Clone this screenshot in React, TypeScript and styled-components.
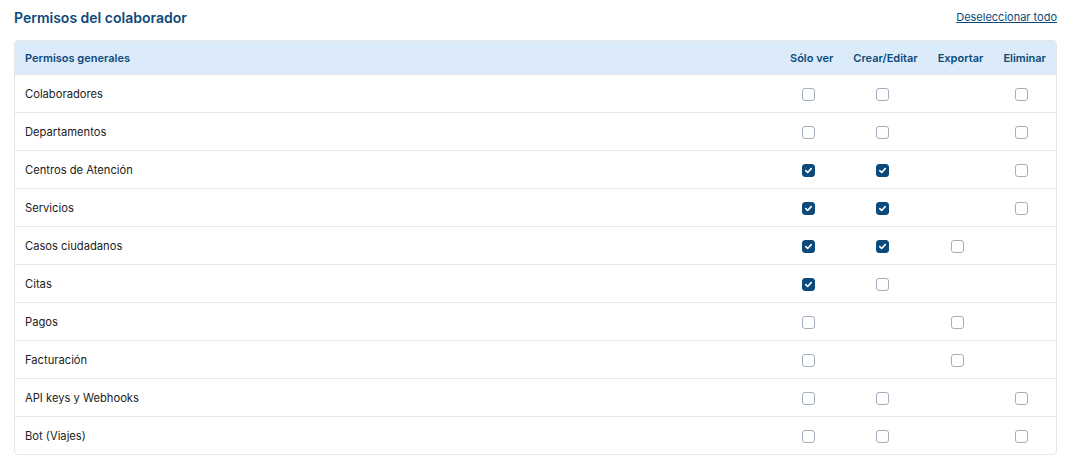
import React, { useState } from "react";
import styled, { createGlobalStyle } from "styled-components";

type Perm = "ver" | "editar" | "exportar" | "eliminar";

interface Modulo {
  nombre: string;
  // null means the permission does not apply to this module
  permisos: Record<Perm, boolean | null>;
}

const columnas: { key: Perm; label: string }[] = [
  { key: "ver", label: "Sólo ver" },
  { key: "editar", label: "Crear/Editar" },
  { key: "exportar", label: "Exportar" },
  { key: "eliminar", label: "Eliminar" },
];

const inicial: Modulo[] = [
  { nombre: "Colaboradores", permisos: { ver: false, editar: false, exportar: null, eliminar: false } },
  { nombre: "Departamentos", permisos: { ver: false, editar: false, exportar: null, eliminar: false } },
  { nombre: "Centros de Atención", permisos: { ver: true, editar: true, exportar: null, eliminar: false } },
  { nombre: "Servicios", permisos: { ver: true, editar: true, exportar: null, eliminar: false } },
  { nombre: "Casos ciudadanos", permisos: { ver: true, editar: true, exportar: false, eliminar: null } },
  { nombre: "Citas", permisos: { ver: true, editar: false, exportar: null, eliminar: null } },
  { nombre: "Pagos", permisos: { ver: false, editar: null, exportar: false, eliminar: null } },
  { nombre: "Facturación", permisos: { ver: false, editar: null, exportar: false, eliminar: null } },
  { nombre: "API keys y Webhooks", permisos: { ver: false, editar: false, exportar: null, eliminar: false } },
  { nombre: "Bot (Viajes)", permisos: { ver: false, editar: false, exportar: null, eliminar: false } },
];

export default function App() {
  const [modulos, setModulos] = useState<Modulo[]>(inicial);

  const toggle = (i: number, key: Perm) => {
    setModulos((prev) =>
      prev.map((m, idx) =>
        idx === i ? { ...m, permisos: { ...m.permisos, [key]: !m.permisos[key] } } : m
      )
    );
  };

  const deseleccionar = () => {
    setModulos((prev) =>
      prev.map((m) => {
        const p = { ...m.permisos };
        (Object.keys(p) as Perm[]).forEach((k) => {
          if (p[k] !== null) p[k] = false;
        });
        return { ...m, permisos: p };
      })
    );
  };

  return (
    <>
      <GlobalStyle />
      <Page>
        <TopBar>
          <Title>Permisos del colaborador</Title>
          <LinkBtn onClick={deseleccionar}>Deseleccionar todo</LinkBtn>
        </TopBar>
        <TableWrap>
          <Table>
            <thead>
              <tr>
                <Th>Permisos generales</Th>
                {columnas.map((c) => (
                  <Th key={c.key} $center>
                    {c.label}
                  </Th>
                ))}
              </tr>
            </thead>
            <tbody>
              {modulos.map((m, i) => (
                <Row key={m.nombre}>
                  <Td>{m.nombre}</Td>
                  {columnas.map((c) => (
                    <Td key={c.key} $center>
                      {m.permisos[c.key] !== null && (
                        <Check
                          type="button"
                          $checked={!!m.permisos[c.key]}
                          onClick={() => toggle(i, c.key)}
                        >
                          {m.permisos[c.key] && (
                            <svg width="9" height="9" viewBox="0 0 10 10">
                              <path
                                d="M2 5.2 L4.1 7.2 L8 2.9"
                                fill="none"
                                stroke="#fff"
                                strokeWidth="1.8"
                                strokeLinecap="round"
                                strokeLinejoin="round"
                              />
                            </svg>
                          )}
                        </Check>
                      )}
                    </Td>
                  ))}
                </Row>
              ))}
            </tbody>
          </Table>
        </TableWrap>
      </Page>
    </>
  );
}

const GlobalStyle = createGlobalStyle`
  body {
    margin: 0;
    background: #fff;
    font-family: Inter, "Noto Sans", sans-serif;
  }
`;

const Page = styled.div`
  padding: 7px 19px 0 14px;
`;

const TopBar = styled.div`
  display: flex;
  justify-content: space-between;
  align-items: center;
  height: 20px;
  margin-bottom: 13px;
`;

const Title = styled.h2`
  margin: 0;
  font-size: 14px;
  font-weight: 600;
  color: #0c4a7b;
`;

const LinkBtn = styled.button`
  background: none;
  border: none;
  padding: 0;
  margin-top: -1px;
  font-family: inherit;
  font-size: 11px;
  color: #0c4a7b;
  text-decoration: underline;
  cursor: pointer;
`;

const TableWrap = styled.div`
  border: 1px solid #e3e6ea;
  border-radius: 4px;
  overflow: hidden;
`;

const Table = styled.table`
  width: 100%;
  border-collapse: collapse;
`;

const Th = styled.th<{ $center?: boolean }>`
  background: #dcebf9;
  height: 33px;
  padding: 0 10px;
  text-align: ${({ $center }) => ($center ? "center" : "left")};
  font-size: 11px;
  font-weight: 600;
  color: #0c4a7b;
  white-space: nowrap;
  width: ${({ $center }) => ($center ? "1%" : "auto")};
`;

const Row = styled.tr`
  border-top: 1px solid #e3e6ea;
`;

const Td = styled.td<{ $center?: boolean }>`
  height: 37px;
  padding: 0 10px;
  font-size: 11.2px;
  color: #222;
  text-align: ${({ $center }) => ($center ? "center" : "left")};
  vertical-align: middle;
`;

const Check = styled.button<{ $checked: boolean }>`
  display: inline-flex;
  align-items: center;
  justify-content: center;
  width: 13px;
  height: 13px;
  padding: 0;
  margin: 2px 7px 0 0;
  border-radius: 3px;
  border: 1px solid ${({ $checked }) => ($checked ? "#0c4a7b" : "#a5afbc")};
  background: ${({ $checked }) => ($checked ? "#0c4a7b" : "#fff")};
  cursor: pointer;
  vertical-align: middle;
`;
